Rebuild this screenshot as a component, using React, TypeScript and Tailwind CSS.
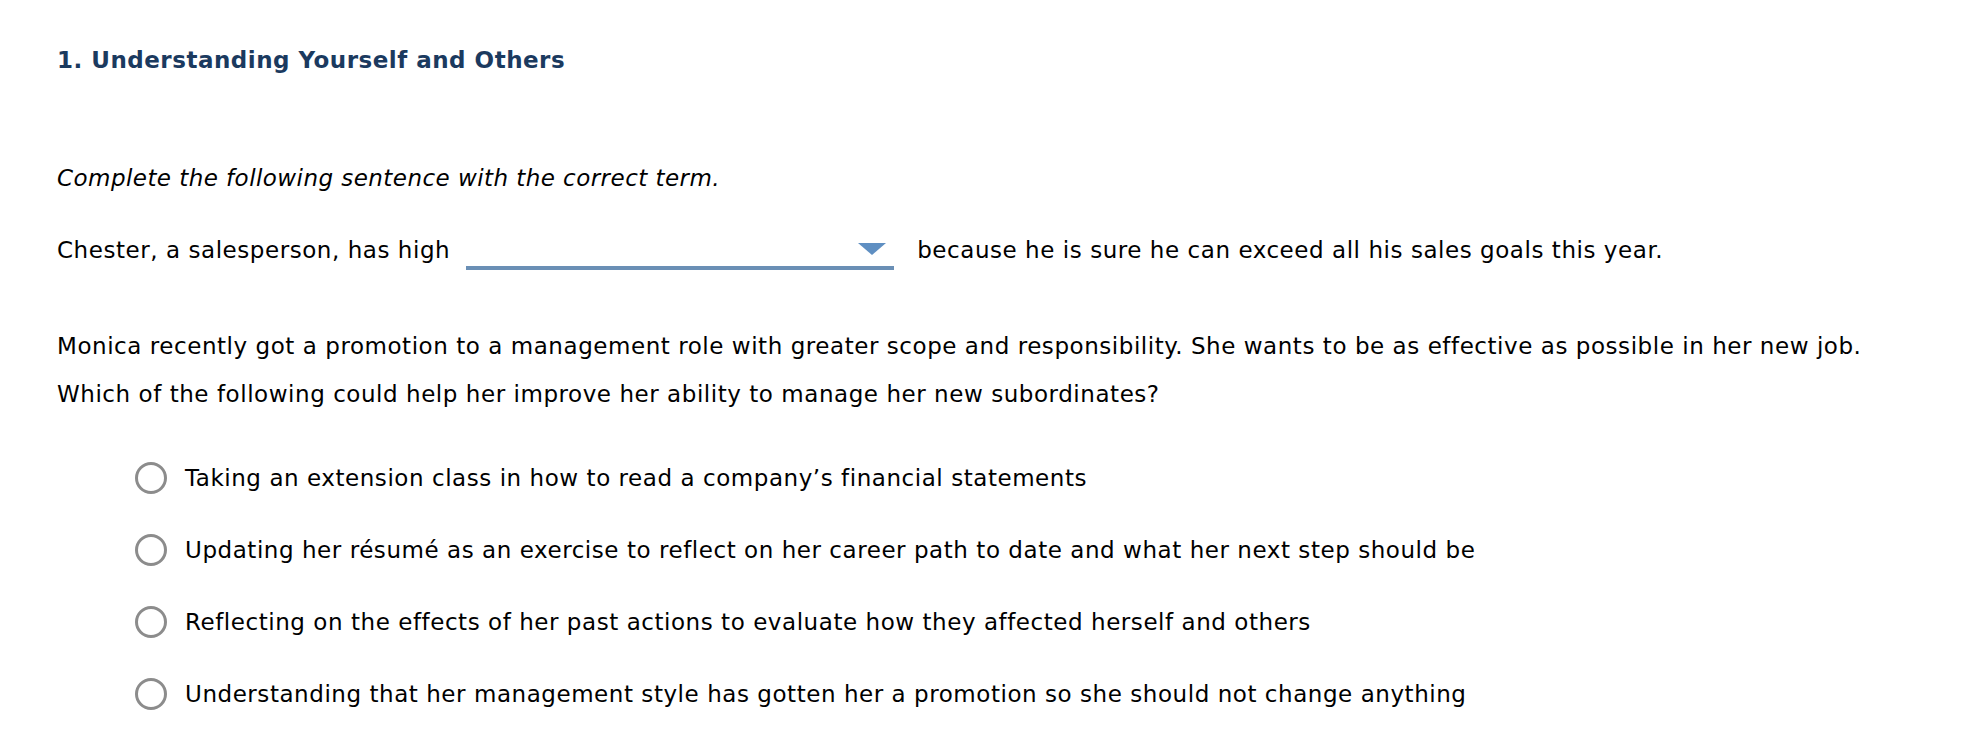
const options = [
  'Taking an extension class in how to read a company\u2019s financial statements',
  'Updating her r\u00e9sum\u00e9 as an exercise to reflect on her career path to date and what her next step should be',
  'Reflecting on the effects of her past actions to evaluate how they affected herself and others',
  'Understanding that her management style has gotten her a promotion so she should not change anything',
];

export default function App() {
  return (
    <div className="min-h-screen bg-white pl-[57px] pt-[45px] text-[23px] tracking-[0.55px] text-black" style={{ fontFamily: '"DejaVu Sans", Verdana, sans-serif' }}>
      <h1 className="text-[23px] font-bold leading-[30px] tracking-[0.5px] text-[#1b3a5f]">1. Understanding Yourself and Others</h1>

      <p className="mt-[88px] italic leading-[30px] tracking-[0.45px]">Complete the following sentence with the correct term.</p>

      <div className="mt-[37px] flex h-[40px] items-center">
        <span>Chester, a salesperson, has high</span>
        <div className="relative ml-[16px] mt-[35px] h-[4px] w-[428px] bg-[#6a8fb5]">
          <svg className="absolute right-[8px] top-[-23px]" width="28" height="12" viewBox="0 0 28 12">
            <polygon points="0,0 28,0 14,12" fill="#5f8fc2" />
          </svg>
        </div>
        <span className="ml-[23px]">because he is sure he can exceed all his sales goals this year.</span>
      </div>

      <div className="mt-[52px] leading-[48px]">
        <p>Monica recently got a promotion to a management role with greater scope and responsibility. She wants to be as effective as possible in her new job.</p>
        <p>Which of the following could help her improve her ability to manage her new subordinates?</p>
      </div>

      <div className="mt-[24px] pl-[78px]">
        {options.map((o) => (
          <label key={o} className="flex h-[72px] items-center">
            <span className="h-[32px] w-[32px] shrink-0 rounded-full border-[3px] border-[#8c8c8c]" />
            <span className="ml-[18px]">{o}</span>
          </label>
        ))}
      </div>
    </div>
  );
}
